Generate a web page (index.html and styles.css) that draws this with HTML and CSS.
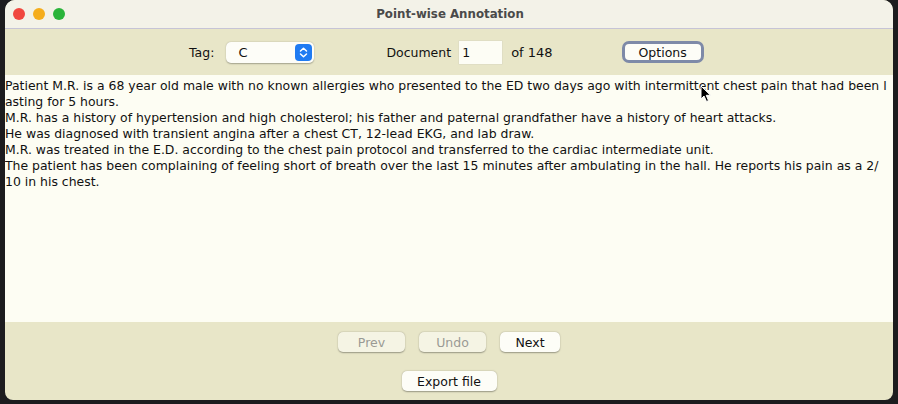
FILE: index.html
```html
<!DOCTYPE html>
<html>
<head>
<meta charset="utf-8">
<link rel="stylesheet" href="styles.css">
</head>
<body>
<div class="window">
  <div class="titlebar">
    <div class="lights">
      <span class="light red"></span>
      <span class="light yellow"></span>
      <span class="light green"></span>
    </div>
    <div class="title">Point-wise Annotation</div>
  </div>
  <div class="toolbar">
    <span class="label tag-label">Tag:</span>
    <div class="popup">
      <span class="popup-value">C</span>
      <span class="popup-arrows">
        <svg width="17" height="17" viewBox="0 0 17 17"><path d="M5.5 7 L8.5 4.2 L11.5 7 M5.5 10 L8.5 12.8 L11.5 10" fill="none" stroke="#fff" stroke-width="1.5" stroke-linecap="round" stroke-linejoin="round"/></svg>
      </span>
    </div>
    <span class="label doc-label">Document</span>
    <div class="numfield">1</div>
    <span class="label of-label">of 148</span>
    <div class="btn options">Options</div>
  </div>
  <div class="textarea">
    <div class="line">Patient M.R. is a 68 year old male with no known allergies who presented to the ED two days ago with intermittent chest pain that had been l</div>
    <div class="line">asting for 5 hours.</div>
    <div class="line">M.R. has a history of hypertension and high cholesterol; his father and paternal grandfather have a history of heart attacks.</div>
    <div class="line">He was diagnosed with transient angina after a chest CT, 12-lead EKG, and lab draw.</div>
    <div class="line">M.R. was treated in the E.D. according to the chest pain protocol and transferred to the cardiac intermediate unit.</div>
    <div class="line">The patient has been complaining of feeling short of breath over the last 15 minutes after ambulating in the hall. He reports his pain as a 2/</div>
    <div class="line">10 in his chest.</div>
    <svg class="cursor" width="12" height="18" viewBox="0 0 12 18"><path d="M1 1 L1 14 L4 11 L6.5 16.5 L8.5 15.6 L6.2 10.3 L10.5 10.3 Z" fill="#000" stroke="#fff" stroke-width="1"/></svg>
  </div>
  <div class="bottom">
    <div class="row">
      <div class="btn disabled prev">Prev</div>
      <div class="btn disabled undo">Undo</div>
      <div class="btn next">Next</div>
    </div>
    <div class="row">
      <div class="btn export">Export file</div>
    </div>
  </div>
</div>
</body>
</html>
```
FILE: styles.css
```css
html, body {
  margin: 0;
  padding: 0;
}
body {
  background: #1c1c1e;
  width: 898px;
  height: 404px;
  overflow: hidden;
  font-family: "DejaVu Sans", "Liberation Sans", sans-serif;
}
.window {
  margin-left: 5px;
  width: 888px;
  height: 400px;
  background: #e8e6c8;
  border-radius: 10px 10px 8px 8px;
  overflow: hidden;
  display: flex;
  flex-direction: column;
}
.titlebar {
  height: 28px;
  flex: none;
  background: #f3f2e8;
  border-bottom: 1px solid #c6c4d6;
  position: relative;
  display: flex;
  align-items: center;
  justify-content: center;
}
.lights {
  position: absolute;
  left: 8px;
  top: 8px;
  display: flex;
  gap: 8px;
}
.light {
  width: 12px;
  height: 12px;
  border-radius: 50%;
  display: block;
}
.red { background: #f0473f; }
.yellow { background: #f5ad1c; }
.green { background: #2ab43a; }
.title {
  font-family: "DejaVu Sans", sans-serif;
  font-weight: bold;
  font-size: 11.8px;
  color: #4a4a4a;
  margin-left: 2px;
}
.toolbar {
  height: 46px;
  flex: none;
  display: flex;
  align-items: center;
  padding-left: 184px;
  font-size: 12.5px;
  color: #111;
}
.label {
  display: block;
}
.popup {
  margin-left: 12px;
  width: 88px;
  height: 21px;
  background: #fdfdf8;
  border-radius: 5px;
  box-shadow: 0 0.5px 1.5px rgba(0,0,0,0.3);
  display: flex;
  align-items: center;
  justify-content: space-between;
  box-sizing: border-box;
  padding: 0 2px 0 12px;
}
.popup-value {
  font-size: 13px;
}
.popup-arrows {
  width: 17px;
  height: 17px;
  background: #1f7bf2;
  border-radius: 4px;
  display: block;
}
.popup-arrows svg { display: block; }
.doc-label {
  margin-left: 72px;
}
.numfield {
  margin-left: 8px;
  width: 43px;
  height: 23px;
  background: #fdfdf5;
  box-sizing: border-box;
  padding: 4px 0 0 3px;
  font-size: 12.5px;
  box-shadow: 0 0 0 0.5px #d8d6c0;
}
.of-label {
  margin-left: 9px;
  font-size: 13px;
}
.btn {
  background: #fdfdf7;
  border-radius: 5px;
  box-shadow: 0 0.5px 1.5px rgba(0,0,0,0.35);
  display: flex;
  align-items: center;
  justify-content: center;
  box-sizing: border-box;
  font-size: 12.5px;
  color: #111;
}
.options {
  margin-left: 69px;
  width: 82px;
  height: 22px;
  border: 3px solid #7e8aa8;
  border-radius: 7px;
  box-shadow: none;
}
.textarea {
  height: 247px;
  flex: none;
  background: #fdfdf3;
  padding: 3px 0 0 0;
  box-sizing: border-box;
  position: relative;
  font-size: 12.45px;
  color: #111;
}
.line {
  height: 16px;
  line-height: 16px;
  white-space: nowrap;
}
.cursor {
  position: absolute;
  left: 695px;
  top: 10px;
}
.bottom {
  flex: 1;
  display: flex;
  flex-direction: column;
  align-items: center;
  padding-top: 10px;
  gap: 19px;
}
.row {
  display: flex;
  gap: 14px;
  padding-left: 0;
}
.bottom .btn {
  height: 20px;
}
.prev { width: 67px; }
.undo { width: 67px; }
.next { width: 60px; }
.export { width: 95px; }
.disabled {
  color: #9a9a94;
  background: #f5f4e4;
}
```
